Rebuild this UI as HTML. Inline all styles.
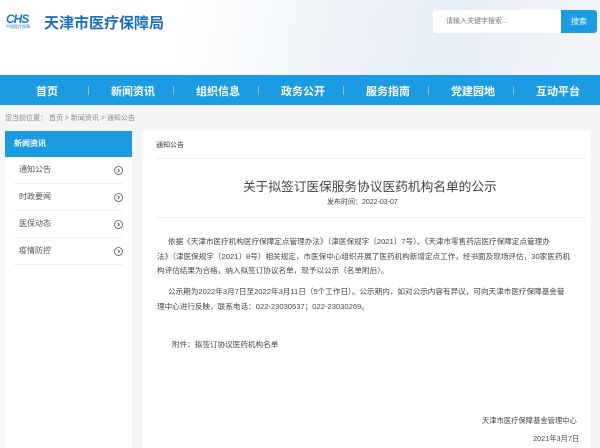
<!DOCTYPE html>
<html><head><meta charset="utf-8"><style>
*{margin:0;padding:0;box-sizing:border-box}
body{width:600px;height:448px;overflow:hidden;background:#f4f5f6;font-family:"Liberation Sans","Noto Sans CJK SC",sans-serif;color:#333;position:relative}
.a{position:absolute;white-space:nowrap}
.hd{position:absolute;left:0;top:0;width:600px;height:75px;background:linear-gradient(100deg,#fff 0%,#fff 30%,#eef3f8 55%,#e6eef5 75%,#f3f6f9 100%)}
.nav{position:absolute;left:0;top:75px;width:600px;height:30px;background:#1a9be2}
.nav span{position:absolute;top:8px;color:#fff;font-size:11px;font-weight:bold}
.nav i{position:absolute;top:11px;width:1px;height:9px;background:#7cc6f0}
.side{position:absolute;left:5px;top:131px;width:127px;height:317px;background:#fff}
.sh{height:26px;background:#1a9be2;color:#fff;font-size:8px;font-weight:bold;padding:7px 0 0 9px}
.si{position:absolute;left:9px;width:109px;height:27px;border-bottom:1px solid #eee;font-size:8px;color:#555}
.si span{position:absolute;left:5px;top:7px}
.si svg{position:absolute;right:0;top:9px}
.main{position:absolute;left:142px;top:131px;width:448px;height:317px;background:#fff}
.p{font-size:7.6px;color:#444;left:15px;white-space:normal;width:425px}
</style></head><body>
<div class="hd"></div>
<div class="a" style="left:6px;top:12px;font-size:12px;font-weight:bold;font-style:italic;color:#1a7cc8;letter-spacing:-1px">CHS</div>
<div class="a" style="left:6px;top:24px;font-size:4px;color:#1a7cc8">中国医疗保障</div>
<div class="a" style="left:44px;top:12px;font-size:15px;font-weight:bold;color:#1b6fb8">天津市医疗保障局</div>
<div class="a" style="left:433px;top:10px;width:128px;height:23px;background:#fff;border-radius:3px 0 0 3px"></div>
<div class="a" style="left:446px;top:16px;font-size:7px;color:#777">请输入关键字搜索...</div>
<div class="a" style="left:561px;top:10px;width:36px;height:23px;background:#1a9be2;border-radius:0 3px 3px 0;color:#fff;font-size:8px;text-align:center;line-height:23px">搜索</div>
<div class="nav">
<span style="left:36px">首页</span><i style="left:88px"></i>
<span style="left:111px">新闻资讯</span><i style="left:173px"></i>
<span style="left:196px">组织信息</span><i style="left:258px"></i>
<span style="left:281px">政务公开</span><i style="left:343px"></i>
<span style="left:366px">服务指南</span><i style="left:428px"></i>
<span style="left:451px">党建园地</span><i style="left:513px"></i>
<span style="left:536px">互动平台</span>
</div>
<div class="a" style="left:5px;top:113px;font-size:7px;color:#888">您当前位置：&nbsp;首页 &gt; 新闻资讯 &gt; 通知公告</div>
<div class="side"><div class="sh">新闻资讯</div>
<div class="si" style="top:26px"><span>通知公告</span><svg width="9" height="9" viewBox="0 0 9 9"><circle cx="4.5" cy="4.5" r="4" fill="none" stroke="#555" stroke-width=".8"/><path d="M3.7 2.8 5.4 4.5 3.7 6.2" fill="none" stroke="#555" stroke-width=".9"/></svg></div>
<div class="si" style="top:53px"><span>时政要闻</span><svg width="9" height="9" viewBox="0 0 9 9"><circle cx="4.5" cy="4.5" r="4" fill="none" stroke="#555" stroke-width=".8"/><path d="M3.7 2.8 5.4 4.5 3.7 6.2" fill="none" stroke="#555" stroke-width=".9"/></svg></div>
<div class="si" style="top:80px"><span>医保动态</span><svg width="9" height="9" viewBox="0 0 9 9"><circle cx="4.5" cy="4.5" r="4" fill="none" stroke="#555" stroke-width=".8"/><path d="M3.7 2.8 5.4 4.5 3.7 6.2" fill="none" stroke="#555" stroke-width=".9"/></svg></div>
<div class="si" style="top:107px"><span>疫情防控</span><svg width="9" height="9" viewBox="0 0 9 9"><circle cx="4.5" cy="4.5" r="4" fill="none" stroke="#555" stroke-width=".8"/><path d="M3.7 2.8 5.4 4.5 3.7 6.2" fill="none" stroke="#555" stroke-width=".9"/></svg></div>
</div>
<div class="main">
<div class="a" style="left:14px;top:9px;font-size:7px;color:#333">通知公告</div>
<div class="a" style="left:14px;top:27px;width:430px;height:1px;background:#eee"></div>
<div class="a" style="left:101px;top:45px;font-size:12.7px;color:#444">关于拟签订医保服务协议医药机构名单的公示</div>
<div class="a" style="left:185px;top:66px;font-size:7px;color:#444">发布时间：2022-03-07</div>
<div class="a" style="left:14px;top:86px;width:430px;height:1px;background:#eee"></div>
<div class="a p" style="top:104px;line-height:14.7px;text-indent:11px">依据《天津市医疗机构医疗保障定点管理办法》（津医保规字〔2021〕7号）、《天津市零售药店医疗保障定点管理办<br>法》（津医保规字〔2021〕8号）相关规定，市医保中心组织开展了医药机构新增定点工作，经书面及现场评估，30家医药机<br>构评估结果为合格，纳入拟签订协议名单，现予以公示（名单附后）。</div>
<div class="a p" style="top:154px;line-height:14.7px;text-indent:11px">公示期为2022年3月7日至2022年3月11日（5个工作日）。公示期内，如对公示内容有异议，可向天津市医疗保障基金管<br>理中心进行反映，联系电话：022-23030537；022-23030269。</div>
<div class="a p" style="left:30px;top:208px">附件：拟签订协议医药机构名单</div>
<div class="a" style="left:340px;top:285px;font-size:7.3px;color:#444">天津市医疗保障基金管理中心</div>
<div class="a" style="left:391px;top:303px;font-size:7.3px;color:#444">2021年3月7日</div>
</div>
</body></html>
